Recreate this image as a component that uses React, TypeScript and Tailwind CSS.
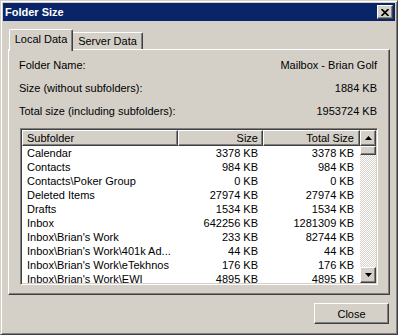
import React from 'react'

const rows: [string, string, string][] = [
  ['Calendar', '3378 KB', '3378 KB'],
  ['Contacts', '984 KB', '984 KB'],
  ['Contacts\\Poker Group', '0 KB', '0 KB'],
  ['Deleted Items', '27974 KB', '27974 KB'],
  ['Drafts', '1534 KB', '1534 KB'],
  ['Inbox', '642256 KB', '1281309 KB'],
  ["Inbox\\Brian's Work", '233 KB', '82744 KB'],
  ["Inbox\\Brian's Work\\401k Ad...", '44 KB', '44 KB'],
  ["Inbox\\Brian's Work\\eTekhnos", '176 KB', '176 KB'],
  ["Inbox\\Brian's Work\\EWI", '4895 KB', '4895 KB'],
]

const raised =
  'bg-[#d4d0c8] border border-t-white border-l-white border-r-[#404040] border-b-[#404040] shadow-[inset_-1px_-1px_#808080]'

function Arrow({ down }: { down?: boolean }) {
  return (
    <div className={`${raised} w-[16px] h-[16px] flex items-center justify-center shrink-0`}>
      <svg width="7" height="4" viewBox="0 0 7 4">
        <polygon points={down ? '0,0 7,0 3.5,4' : '3.5,0 7,4 0,4'} fill="#000" />
      </svg>
    </div>
  )
}

export default function App() {
  return (
    <div className="w-[398px] h-[335px] bg-[#d4d0c8] border border-t-[#d4d0c8] border-l-[#d4d0c8] border-r-[#404040] border-b-[#404040] shadow-[inset_1px_1px_#fff,inset_-1px_-1px_#808080] p-[2px] font-['Liberation_Sans',Arial,sans-serif] text-[11px] text-black flex flex-col">
      {/* Title bar */}
      <div className="h-[18px] bg-[#0a246a] flex items-center justify-between pl-[2px] pr-[2px] shrink-0">
        <span className="font-bold text-white text-[11px] leading-[14px]">Folder Size</span>
        <div className={`${raised} w-[16px] h-[14px] flex items-center justify-center`}>
          <svg width="8" height="7" viewBox="0 0 8 7">
            <path d="M0.5 0 L7.5 7 M7.5 0 L0.5 7" stroke="#000" strokeWidth="1.6" />
          </svg>
        </div>
      </div>

      {/* Tabs */}
      <div className="mt-[8px] ml-[6px] flex items-end h-[20px] shrink-0">
        <div className="relative z-10 -mb-[2px] h-[22px] w-[64px] bg-[#d4d0c8] border-t border-l border-t-white border-l-white border-r border-r-[#404040] shadow-[inset_-1px_0_#808080] rounded-t-[2px] flex items-start justify-center pt-[2px] leading-[14px]">
          Local Data
        </div>
        <div className="h-[17px] w-[70px] bg-[#d4d0c8] border-t border-t-white border-r border-r-[#404040] shadow-[inset_-1px_0_#808080] rounded-tr-[2px] flex items-start justify-center pt-[1px] leading-[14px]">
          Server Data
        </div>
      </div>

      {/* Tab panel */}
      <div className="mx-[5px] h-[246px] border border-t-white border-l-white border-r-[#404040] border-b-[#404040] shadow-[inset_-1px_-1px_#808080] pl-[10px] pt-[8px] shrink-0">
        <div className="flex flex-col gap-[9px] pr-[12px]">
          <div className="flex justify-between h-[14px] leading-[14px]">
            <span>Folder Name:</span>
            <span>Mailbox - Brian Golf</span>
          </div>
          <div className="flex justify-between h-[14px] leading-[14px]">
            <span>Size (without subfolders):</span>
            <span>1884 KB</span>
          </div>
          <div className="flex justify-between h-[14px] leading-[14px]">
            <span>Total size (including subfolders):</span>
            <span>1953724 KB</span>
          </div>
        </div>

        {/* List */}
        <div className="mt-[10px] ml-[1px] w-[358px] h-[157px] bg-white border border-t-[#808080] border-l-[#808080] border-r-white border-b-white shadow-[inset_1px_1px_#404040,inset_-1px_-1px_#d4d0c8] p-[1px] flex overflow-hidden">
          <div className="w-[338px] flex flex-col overflow-hidden">
            <div className="flex h-[16px] shrink-0 leading-[14px]">
              <div className={`${raised} w-[156px] pl-[4px]`}>Subfolder</div>
              <div className={`${raised} w-[85px] text-right pr-[4px]`}>Size</div>
              <div className={`${raised} w-[97px] text-right pr-[5px]`}>Total Size</div>
            </div>
            {rows.map(([name, size, total]) => (
              <div key={name} className="flex h-[14px] shrink-0 leading-[14px]">
                <div className="w-[156px] pl-[5px] whitespace-nowrap overflow-hidden">{name}</div>
                <div className="w-[85px] text-right pr-[5px]">{size}</div>
                <div className="w-[97px] text-right pr-[6px]">{total}</div>
              </div>
            ))}
          </div>
          {/* Scrollbar */}
          <div className="w-[16px] flex flex-col">
            <Arrow />
            <div className={`${raised} h-[9px] shrink-0`} />
            <div className="flex-1 bg-[image:repeating-conic-gradient(#fff_0%_25%,#d4d0c8_0%_50%)] bg-[length:2px_2px]" />
            <Arrow down />
          </div>
        </div>
      </div>

      {/* Footer */}
      <div className="flex justify-end mt-[8px] mr-[6px]">
        <div className={`${raised} w-[75px] h-[21px] flex items-center justify-center leading-[14px]`}>Close</div>
      </div>
    </div>
  )
}
